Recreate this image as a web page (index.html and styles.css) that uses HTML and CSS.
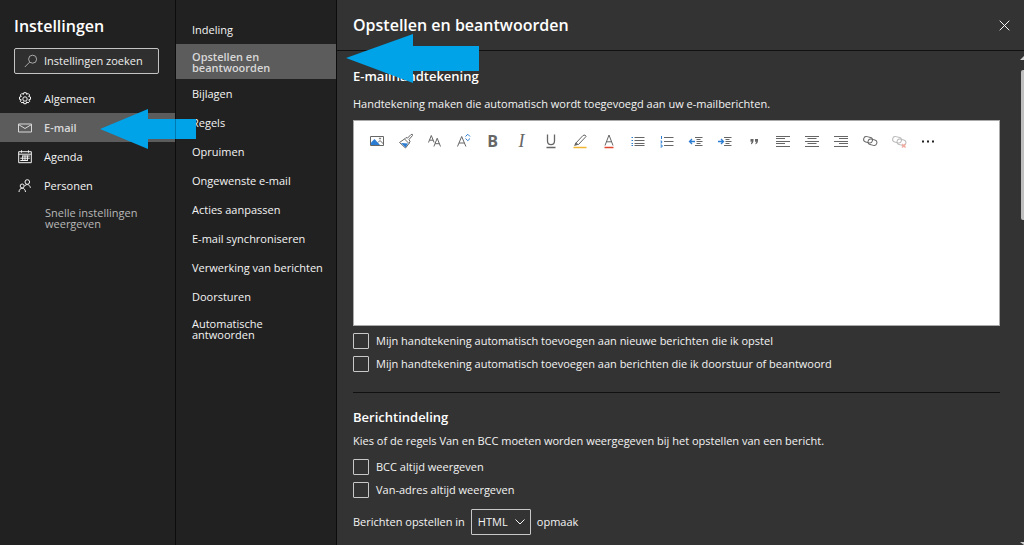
FILE: index.html
```
<!DOCTYPE html>
<html lang="nl">
<head>
<meta charset="utf-8">
<title>Instellingen</title>
<link rel="stylesheet" href="styles.css">
</head>
<body>
<div class="app">
  <nav class="sidebar" aria-label="Instellingen">
    <h1 class="title sidebar-title">Instellingen</h1>
    <label class="search">
      <svg class="search-icon" width="14" height="14" viewBox="0 0 14 14"><circle cx="8.6" cy="5.2" r="4"/><path d="M5.6 8.2 0.8 13"/></svg>
      <input type="text" placeholder="Instellingen zoeken" aria-label="Instellingen zoeken">
    </label>
    <a class="nav-item" href="#">
      <svg width="14" height="14" viewBox="0 0 14 14"><circle cx="7" cy="7" r="2.2"/><path d="M5.8.7h2.4l.4 1.700 1.500-1 1.600 1.600-1 1.500 1.800.5v2.400l-1.800.4 1 1.500-1.600 1.600-1.500-1-.4 1.800H5.800l-.4-1.800-1.500 1-1.600-1.600 1-1.500-1.800-.4V5l1.800-.5-1-1.500 1.600-1.600 1.500 1z"/></svg>
      Algemeen</a>
    <a class="nav-item selected" href="#">
      <svg width="14" height="14" viewBox="0 0 14 14"><path d="M.5 3h13v8H.5zM.5 3.500 7 7.500l6.500-4"/></svg>
      E-mail</a>
    <a class="nav-item" href="#">
      <svg width="14" height="14" viewBox="0 0 14 14"><path d="M.7 1.700h12.600v11H.7zM.7 4.200h12.600M3.500.3v2.400M10.500.3v2.400"/><path d="M4.500 6h7.300M2.300 8.200h9.500M2.300 10.500h7.300M4.700 5.500v5.500M7 5.500v5.500M9.400 5.500v5.500"/></svg>
      Agenda</a>
    <a class="nav-item" href="#">
      <svg width="14" height="14" viewBox="0 0 14 14"><circle cx="9.300" cy="3" r="2.300"/><path d="M6.500 7.200c1.500-2.500 5.200-2.200 5.900 1.600"/><circle cx="4.200" cy="7" r="2"/><path d="M1 13c.2-5 6.200-5 6.500 0"/></svg>
      Personen</a>
    <a class="quick" href="#">Snelle instellingen weergeven</a>
  </nav>

  <nav class="subnav" aria-label="E-mail">
    <a href="#">Indeling</a>
    <a class="selected" href="#">Opstellen en beantwoorden</a>
    <a href="#">Bijlagen</a>
    <a href="#">Regels</a>
    <a href="#">Opruimen</a>
    <a href="#">Ongewenste e-mail</a>
    <a href="#">Acties aanpassen</a>
    <a href="#">E-mail synchroniseren</a>
    <a href="#">Verwerking van berichten</a>
    <a href="#">Doorsturen</a>
    <a class="two-line" href="#">Automatische antwoorden</a>
  </nav>

  <main class="panel">
    <header class="panel-header">
      <h2 class="title">Opstellen en beantwoorden</h2>
      <button class="close" type="button" aria-label="Sluiten"><svg width="11" height="11" viewBox="0 0 11 11"><path d="m.7.7 9.600 9.600M10.300.7.7 10.300"/></svg></button>
    </header>
    <div class="body">
      <div class="content">
        <section class="signature">
          <h3>E-mailhandtekening</h3>
          <p>Handtekening maken die automatisch wordt toegevoegd aan uw e-mailberichten.</p>
          <div class="editor">
            <div class="toolbar">
              <button type="button" aria-label="Afbeelding"><svg viewBox="0 0 16 16"><path d="M1.500 3.500h13v9h-13z"/><path class="blue-fill" d="M2 12V9.500L5.500 6l5.500 6z"/><path d="m9 9.500 2-2 3.500 3.500"/><circle cx="11" cy="5.500" r=".6"/></svg></button>
              <button type="button" aria-label="Opmaak kopiëren"><svg viewBox="0 0 16 16"><path d="m1.500 9.500 5-3.500 4.500 4.500L7.500 15zM6.500 6l1.500-1.500 1.500.6 3.500-3.600q2-.8 1.500 1L11 6.500l1 2-1 2"/><path class="blue-fill" d="m3 10 7 .5-2.500 4z"/></svg></button>
              <button type="button" aria-label="Lettertype"><svg viewBox="0 0 16 16"><path d="M1.500 9.500 4.300 2.500l2.800 7M2.500 7.200h3.600M6.900 13.500l3.300-8.300 3.300 8.300M8.100 10.700h4.200"/></svg></button>
              <button type="button" aria-label="Tekengrootte"><svg viewBox="0 0 16 16"><path d="m1.500 13.500 4.200-10 4.200 10M3 10h5.400"/><path class="blue" d="M9.500 3.500 11.800 1.300 14 3.500M9.500 5.500l2.300 2.200L14 5.500"/></svg></button>
              <button class="glyph bold" type="button" aria-label="Vet">B</button>
              <button class="glyph italic" type="button" aria-label="Cursief">I</button>
              <button type="button" aria-label="Onderstrepen"><svg viewBox="0 0 16 16"><path class="mid" d="M4.500 1.500V8c0 4.700 7 4.700 7 0V1.500M3.500 14.500h9"/></svg></button>
              <button type="button" aria-label="Markeren"><svg viewBox="0 0 16 16"><path d="m3.500 10.500 7.500-8q2.500-1.500 3 1l-7.500 8z"/><path class="grey-fill" d="m3.500 9.500 3 2.200L2 13z"/><path class="yellow" d="M1.500 14.500h13"/></svg></button>
              <button type="button" aria-label="Tekstkleur"><svg viewBox="0 0 16 16"><path d="M4 12.500 8 2l4 10.500M5.500 8.800h5"/><path class="red" d="M3.500 14.500h9"/></svg></button>
              <button type="button" aria-label="Opsommingstekens"><svg viewBox="0 0 16 16"><path d="M4.500 4.500h10M4.500 7.500h10M4.500 10.500h10M4.500 12.500h10"/><path class="blue" d="M1.500 4.500h1.500M1.500 7.500h1.500M1.500 10.500h1.500M1.500 12.500h1.500"/></svg></button>
              <button type="button" aria-label="Nummering"><svg viewBox="0 0 16 16"><path d="M5 4.500h9.500M5 8.500h9.500M5 12.500h9.500"/><path class="blue" d="M2.500 3v3M1.500 8h1.200v2H1.500M1.500 12h1.500v2H1.500"/></svg></button>
              <button type="button" aria-label="Inspringing verkleinen"><svg viewBox="0 0 16 16"><path d="M7 4.500h7.500M8.500 6.500h4M8.500 8.500h6M8.500 10.500h4M7 12.500h7.500"/><path class="blue mid" d="M7 8.500H1.500M4 6 1.500 8.500 4 11"/></svg></button>
              <button type="button" aria-label="Inspringing vergroten"><svg viewBox="0 0 16 16"><path d="M7 4.500h7.500M8.500 6.500h4M8.500 8.500h6M8.500 10.500h4M7 12.500h7.500"/><path class="blue mid" d="M1 8.500h5.500M4 6l2.500 2.500L4 11"/></svg></button>
              <button type="button" aria-label="Citaat"><svg viewBox="0 0 16 16"><path class="grey-fill" d="M4.500 6h3v2q0 2.500-2.500 3.500V10l1-1.200H4.500zM9 6h3v2q0 2.500-2.500 3.500V10l1-1.200H9z"/></svg></button>
              <button type="button" aria-label="Links uitlijnen"><svg viewBox="0 0 16 16"><path d="M1 3.500h14M1 5.500h9M1 8.500h14M1 10.500h9M1 13.500h14"/></svg></button>
              <button type="button" aria-label="Centreren"><svg viewBox="0 0 16 16"><path d="M1 3.500h14M3.500 5.500h9M1 8.500h14M3.500 10.500h9M1 13.500h14"/></svg></button>
              <button type="button" aria-label="Rechts uitlijnen"><svg viewBox="0 0 16 16"><path d="M1 3.500h14M6 5.500h9M1 8.500h14M6 10.500h9M1 13.500h14"/></svg></button>
              <button type="button" aria-label="Koppeling invoegen"><svg viewBox="0 0 16 16"><rect x="1.500" y="4" width="9" height="5.500" rx="2.700" transform="rotate(15 6 7)"/><rect x="6" y="6.500" width="9" height="5.500" rx="2.700" transform="rotate(15 10.500 9)"/></svg></button>
              <button type="button" aria-label="Koppeling verwijderen" disabled><svg viewBox="0 0 16 16"><rect x="1.500" y="4" width="9" height="5.500" rx="2.700" transform="rotate(15 6 7)"/><rect x="6" y="6.500" width="9" height="5.500" rx="2.700" transform="rotate(15 10.500 9)"/><path class="red" d="m11 11 3.500 3.500M14.500 11 11 14.500"/></svg></button>
              <button type="button" aria-label="Meer"><svg viewBox="0 0 16 16"><path class="dots" d="M2 7.500h2v2H2zM7 7.500h2v2H7zM12 7.500h2v2h-2z"/></svg></button>
            </div>
            <textarea aria-label="Handtekening"></textarea>
          </div>
          <label class="check"><input type="checkbox">Mijn handtekening automatisch toevoegen aan nieuwe berichten die ik opstel</label>
          <label class="check"><input type="checkbox">Mijn handtekening automatisch toevoegen aan berichten die ik doorstuur of beantwoord</label>
        </section>
        <section class="format">
          <h3>Berichtindeling</h3>
          <p>Kies of de regels Van en BCC moeten worden weergegeven bij het opstellen van een bericht.</p>
          <label class="check"><input type="checkbox">BCC altijd weergeven</label>
          <label class="check"><input type="checkbox">Van-adres altijd weergeven</label>
          <div class="compose">
            <label for="format">Berichten opstellen in</label>
            <span class="select">
              <select id="format"><option>HTML</option></select>
              <svg class="chevron" width="10" height="6" viewBox="0 0 10 6"><path d="m.5.5 4.500 4.500L9.500.5"/></svg>
            </span>
            <span>opmaak</span>
          </div>
        </section>
      </div>
      <div class="scrollbar" aria-hidden="true"><i class="up"></i><i class="thumb"></i><i class="down"></i></div>
    </div>
  </main>

  <svg class="arrow arrow-mail" width="96" height="40" viewBox="0 0 96 40"><path d="M0 20 48 0v10h48v20H48v10z"/><path class="seam" d="M75.500 10v20"/></svg>
  <svg class="arrow arrow-compose" width="133" height="49" viewBox="0 0 133 49"><path d="M0 24 67 0v12h66v25H67v12z"/></svg>
</div>
</body>
</html>
```

FILE: styles.css
```
* { box-sizing: border-box; }
body {
  margin: 0;
  background: #333;
  color: #f4f4f4;
  font: 11px/16px "Open Sans", "Noto Sans", sans-serif;
  overflow: hidden;
}
a { color: inherit; text-decoration: none; }
h1, h2, h3, p { margin: 0; }
svg { flex: none; fill: none; stroke: currentColor; }
button { padding: 0; border: 0; background: none; color: inherit; font: inherit; }

.app { position: relative; display: flex; height: 100vh; }
.title, h3 { font-weight: 600; color: #fff; }
.title { font-size: 16px; line-height: 24px; }

.sidebar {
  flex: 0 0 176px;
  min-width: 0;
  display: flex;
  flex-direction: column;
  background: #212121;
  border-right: 1px solid #0c0c0c;
}
.sidebar-title { padding: 14px 14px 10px; }
.search {
  display: flex;
  align-items: center;
  gap: 6px;
  height: 26px;
  margin: 0 16px 10px 14px;
  padding-left: 9px;
  border: 1px solid #c4c4c4;
  border-radius: 2px;
  background: #2f2f2f;
}
.search-icon { color: #aaa; }
.search input {
  flex: 1;
  width: 0;
  min-width: 0;
  padding: 0;
  border: 0;
  outline: 0;
  background: none;
  font: inherit;
}
.search input::placeholder { color: #eee; opacity: 1; }
.nav-item {
  display: flex;
  align-items: center;
  gap: 12px;
  height: 29px;
  padding-left: 18px;
}
.selected { background: #5c5c5c; color: #d8d8d8; font-weight: 600; }
.quick { padding: 7px 32px 0 45px; line-height: 11px; color: #b8b8b8; }

.subnav {
  flex: 0 0 161px;
  padding-top: 15px;
  background: #212121;
  border-right: 1px solid #0c0c0c;
}
.subnav a { display: block; padding: 7px 8px 6px 16px; }
.subnav a.selected, .subnav a.two-line { padding: 7px 60px 6px 16px; line-height: 11px; }

.panel { flex: 1; min-width: 0; display: flex; flex-direction: column; }
.panel-header {
  flex: none;
  display: flex;
  justify-content: space-between;
  align-items: center;
  height: 51px;
  padding: 0 14px 0 16px;
  border-bottom: 1px solid #111;
}
.close { display: flex; }
.body { flex: 1; min-height: 0; display: flex; justify-content: space-between; overflow: hidden; }
.content { flex: 1; min-width: 0; padding: 16px 20px 0 16px; }
h3 { font-size: 13px; line-height: 18px; }
.signature { padding-bottom: 17px; border-bottom: 1px solid #111; }
.signature p { padding: 11px 0 8px; }
.editor {
  display: flex;
  flex-direction: column;
  height: 206px;
  margin-bottom: 3px;
  border: 1px solid #aaa;
  background: #fff;
}
.toolbar { display: flex; flex-wrap: wrap; padding: 8px 8px 0; color: #666; }
.toolbar button { display: flex; align-items: center; justify-content: center; width: 29px; height: 24px; }
.toolbar svg { width: 16px; height: 16px; }
.toolbar button:disabled { opacity: 0.45; }
.toolbar .glyph { font-size: 16px; }
.toolbar .bold { font-weight: 700; }
.toolbar .italic { font-family: "Liberation Serif", serif; font-style: italic; font-size: 18px; }
.mid { stroke-width: 1.3; }
.toolbar .blue { stroke: #2b7cd3; }
.toolbar .blue-fill { fill: #2b7cd3; stroke: none; }
.grey-fill { fill: #666; stroke: none; }
.yellow { stroke: #f2b632; stroke-width: 1.5; }
.red { stroke: #e0452f; stroke-width: 1.5; }
.dots { fill: #222; stroke: none; }
.editor textarea { flex: 1; border: 0; outline: 0; resize: none; background: none; font: inherit; }

.check { display: flex; align-items: center; gap: 7px; height: 23px; }
.check input {
  appearance: none;
  width: 16px;
  height: 16px;
  margin: 0;
  border: 1px solid #c8c8c8;
  border-radius: 1px;
}
.format { padding-top: 15px; }
.format p { padding: 7px 0 6px; }
.compose { display: flex; align-items: center; gap: 6px; padding-top: 8px; }
.select { display: grid; align-items: center; }
.select select {
  grid-area: 1 / 1;
  appearance: none;
  width: 60px;
  height: 26px;
  padding: 0 6px;
  border: 1px solid #c8c8c8;
  border-radius: 1px;
  background: none;
  color: inherit;
  font: inherit;
}
.chevron { grid-area: 1 / 1; justify-self: end; margin-right: 6px; pointer-events: none; }

.scrollbar { flex: none; display: flex; flex-direction: column; width: 4px; padding-top: 5px; overflow: hidden; }
.up, .down { width: 8px; border: solid transparent; border-width: 0 4px; }
.up { border-bottom: 4px solid #ccc; }
.thumb { height: 150px; margin: 10px 0 auto 1px; border-radius: 2px 0 0 2px; background: #bfbfbf; }
.down { border-top: 3px solid #ccc; }

.arrow { position: absolute; fill: #00a2e8; stroke: none; pointer-events: none; }
.arrow-mail { left: 100px; top: 109px; }
.arrow-compose { left: 346px; top: 34px; }
.seam { stroke: #0078b0; }
```
